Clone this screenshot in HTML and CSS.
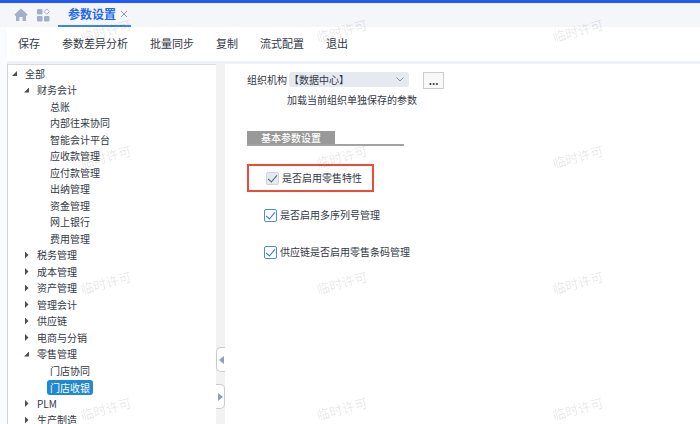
FILE: index.html
```
<!DOCTYPE html>
<html lang="zh-CN">
	<head>
		<meta charset="utf-8">
		<meta name="viewport" content="width=device-width, initial-scale=1">
		<title>参数设置</title>
		<link rel="stylesheet" href="styles.css">
	</head>
	<body>
		<header class="tabs">
			<a class="tab-icon" href="#" aria-label="首页">
				<svg width="14" height="14" viewBox="0 0 14 14"><path d="M7 .6 13.6 6.6 13 7.8H12V13H8.6V9H5.4V13H2V7.8H1L.4 6.6Z"/></svg>
			</a>
			<a class="tab-icon" href="#" aria-label="应用">
				<svg width="14" height="14" viewBox="0 0 14 14"><rect x="1" y="1" width="5.5" height="5.5" rx="1"/><rect x="1" y="8" width="5.5" height="5.5" rx="1"/><rect x="8" y="8" width="5.5" height="5.5" rx="1"/><path class="hollow" d="M10.7 .9 13.4 3.6 10.7 6.3 8 3.6Z"/></svg>
			</a>
			<div class="tab">
				<a href="#">参数设置</a>
				<button type="button" aria-label="关闭">
					<svg width="8" height="8" viewBox="0 0 8 8"><path d="M1 1 7 7M7 1 1 7"/></svg>
				</button>
			</div>
		</header>
		<nav class="toolbar">
			<button type="button">保存</button>
			<button type="button">参数差异分析</button>
			<button type="button">批量同步</button>
			<button type="button">复制</button>
			<button type="button">流式配置</button>
			<button type="button">退出</button>
		</nav>
		<main class="workspace">
			<ul class="tree" role="tree">
				<li class="open" role="treeitem" aria-level="1">全部</li>
				<li class="open level-2" role="treeitem" aria-level="2">财务会计</li>
				<li class="level-3" role="treeitem" aria-level="3">总账</li>
				<li class="level-3" role="treeitem" aria-level="3">内部往来协同</li>
				<li class="level-3" role="treeitem" aria-level="3">智能会计平台</li>
				<li class="level-3" role="treeitem" aria-level="3">应收款管理</li>
				<li class="level-3" role="treeitem" aria-level="3">应付款管理</li>
				<li class="level-3" role="treeitem" aria-level="3">出纳管理</li>
				<li class="level-3" role="treeitem" aria-level="3">资金管理</li>
				<li class="level-3" role="treeitem" aria-level="3">网上银行</li>
				<li class="level-3" role="treeitem" aria-level="3">费用管理</li>
				<li class="closed level-2" role="treeitem" aria-level="2">税务管理</li>
				<li class="closed level-2" role="treeitem" aria-level="2">成本管理</li>
				<li class="closed level-2" role="treeitem" aria-level="2">资产管理</li>
				<li class="closed level-2" role="treeitem" aria-level="2">管理会计</li>
				<li class="closed level-2" role="treeitem" aria-level="2">供应链</li>
				<li class="closed level-2" role="treeitem" aria-level="2">电商与分销</li>
				<li class="open level-2" role="treeitem" aria-level="2">零售管理</li>
				<li class="level-3" role="treeitem" aria-level="3">门店协同</li>
				<li class="level-3" role="treeitem" aria-level="3" aria-selected="true"><span class="selected">门店收银</span></li>
				<li class="closed level-2" role="treeitem" aria-level="2">PLM</li>
				<li class="closed level-2" role="treeitem" aria-level="2">生产制造</li>
			</ul>
			<div class="splitter">
				<button class="fold-left" type="button" aria-label="收起">
					<svg width="5" height="8" viewBox="0 0 5 8"><path d="M5 0V8L0 4Z"/></svg>
				</button>
				<button class="fold-right" type="button" aria-label="展开">
					<svg width="5" height="8" viewBox="0 0 5 8"><path d="M0 0V8L5 4Z"/></svg>
				</button>
			</div>
			<section class="content">
				<div class="org">
					<label for="org">组织机构</label>
					<div class="select">
						<select id="org">
							<option>【数据中心】</option>
						</select>
						<svg width="8" height="5" viewBox="0 0 8 5"><path d="M.5.5 4 4 7.5.5"/></svg>
					</div>
					<button class="more" type="button">...</button>
				</div>
				<p class="hint">加载当前组织单独保存的参数</p>
				<h2><span>基本参数设置</span></h2>
				<label class="option marked"><input type="checkbox" checked disabled>是否启用零售特性</label>
				<label class="option"><input type="checkbox" checked>是否启用多序列号管理</label>
				<label class="option"><input type="checkbox" checked>供应链是否启用零售条码管理</label>
			</section>
		</main>
		<div class="watermark" aria-hidden="true">
			<span>临时许可</span><span>临时许可</span><span>临时许可</span>
			<span>临时许可</span><span>临时许可</span><span>临时许可</span>
			<span>临时许可</span><span>临时许可</span><span>临时许可</span>
			<span>临时许可</span><span>临时许可</span><span>临时许可</span>
		</div>
	</body>
</html>
```
FILE: styles.css
```
* {
	box-sizing:border-box}
body {
	background-color:#fafbff;
	color:#333845;
	display:flex;
	flex-direction:column;
	font-family:"Noto Sans CJK SC", sans-serif;
	font-size:10px;
	height:100vh;
	line-height:16px;
	margin:0;
	overflow:hidden;
	position:relative}
button, select, input {
	color:inherit;
	font:inherit;
	margin:0;
	padding:0}
button {
	background:none;
	border:none}
svg {
	display:block}
/* top tabs */
.tabs {
	align-items:stretch;
	background-color:#f5f6fa;
	border-top:3px solid #2259ff;
	display:flex;
	flex:none;
	gap:8px;
	height:27px;
	padding-left:14px}
.tab-icon {
	align-items:center;
	display:flex}
.tab-icon svg {
	fill:#a3aec8}
.tab-icon .hollow {
	fill:none;
	stroke:#a3aec8}
.tab {
	align-items:center;
	border-bottom:2px solid #3b82f6;
	display:flex;
	gap:4px;
	padding:0 3px 0 10px}
.tab a {
	color:#2468f2;
	font-size:12px;
	font-weight:700;
	text-decoration:none}
.tab path {
	stroke:#8f9bb3}
.toolbar {
	background-color:#ffffff;
	border-bottom:3px solid #eef1f7;
	display:flex;
	flex:none;
	font-size:11px;
	gap:22px;
	height:37px;
	margin-left:7px;
	padding:0 0 2px 11px}
/* tree, splitter and form */
.workspace {
	background-color:#ffffff;
	display:flex;
	flex:1;
	margin-left:7px;
	min-height:0}
.tree {
	border-left:1px solid #d0d2d6;
	border-top:1px solid #d8dadd;
	flex:none;
	list-style:none;
	margin:0;
	overflow:hidden;
	padding:0 0 0 4px;
	width:209px}
.tree li {
	align-items:center;
	display:flex;
	height:17px;
	padding-left:13px}
.tree li:nth-child(even) {
	height:16px}
.tree .level-2 {
	padding-left:25px}
.tree .level-3 {
	padding-left:38px}
.tree .open::before, .tree .closed::before {
	background-color:#4a4f5c;
	content:"";
	height:5px;
	margin-left:-13px;
	margin-right:8px;
	width:5px}
.tree .open::before {
	clip-path:polygon(100% 0, 100% 100%, 0 100%)}
.tree .closed::before {
	clip-path:polygon(20% 0, 90% 50%, 20% 100%);
	height:7px}
.tree .selected {
	background-color:#2188d2;
	border-radius:3px;
	color:#ffffff;
	line-height:15px;
	margin-left:-3px;
	padding:0 3px}
.splitter {
	background-color:#f2f2f2;
	display:flex;
	flex:none;
	flex-direction:column;
	gap:12px;
	justify-content:flex-end;
	padding-bottom:15px;
	width:9px}
.splitter button {
	align-items:center;
	background-color:#ffffff;
	border:1px solid #c9ccd3;
	display:flex;
	height:25px;
	justify-content:center}
.splitter .fold-left {
	border-radius:5px 0 0 5px;
	border-right:none}
.splitter .fold-right {
	border-left:none;
	border-radius:0 5px 5px 0}
.splitter path {
	fill:#929db8}
.content {
	flex:1;
	min-width:0;
	padding:8px 22px}
.org {
	align-items:flex-start;
	display:flex}
.org label {
	width:42px}
.select {
	position:relative;
	width:120px}
.select select {
	appearance:none;
	background-color:#e6e9f0;
	border:none;
	border-radius:3px;
	display:block;
	height:15px;
	line-height:15px;
	width:100%}
.select svg {
	fill:none;
	pointer-events:none;
	position:absolute;
	right:5px;
	stroke:#8a92a3;
	top:5px}
.more {
	background-color:#f8f8f8;
	border:1px solid #cccccc;
	font-weight:700;
	height:17px;
	line-height:12px;
	margin-left:14px;
	width:21px}
.hint {
	margin:3px 0 23px 40px}
h2 {
	border-bottom:2px solid #a3a3a3;
	display:flex;
	font-size:10px;
	font-weight:500;
	margin:0 0 18px;
	width:157px}
h2 span {
	background-color:#999999;
	color:#ffffff;
	line-height:13px;
	padding:0 14px}
.option {
	align-items:center;
	display:flex;
	gap:3px;
	height:28px;
	margin-bottom:9px;
	padding-left:17px;
	width:max-content}
.option.marked {
	border:2px solid #ee4b35;
	padding-right:10px}
.option input {
	appearance:none;
	background-color:#ffffff;
	border:1px solid #4d86f7;
	border-radius:2px;
	display:grid;
	height:13px;
	place-items:center;
	width:13px}
.option input:disabled {
	background-color:#e6e9f0;
	border-color:#d0d4dd}
.option input::before {
	border-bottom:1px solid #2f6fe8;
	border-right:1px solid #2f6fe8;
	content:"";
	height:8px;
	transform:translateY(-1px) rotate(40deg);
	width:4px}
.option input:disabled::before {
	border-color:#555b69}
/* licence stamp repeated over the whole window */
.watermark {
	color:rgba(0,0,0,0.11);
	display:grid;
	font-size:13px;
	grid-template-columns:repeat(3, 236px);
	grid-auto-rows:126px;
	left:-12px;
	place-items:center;
	pointer-events:none;
	position:absolute;
	top:-32px}
.watermark span {
	transform:rotate(-15deg)}
```
